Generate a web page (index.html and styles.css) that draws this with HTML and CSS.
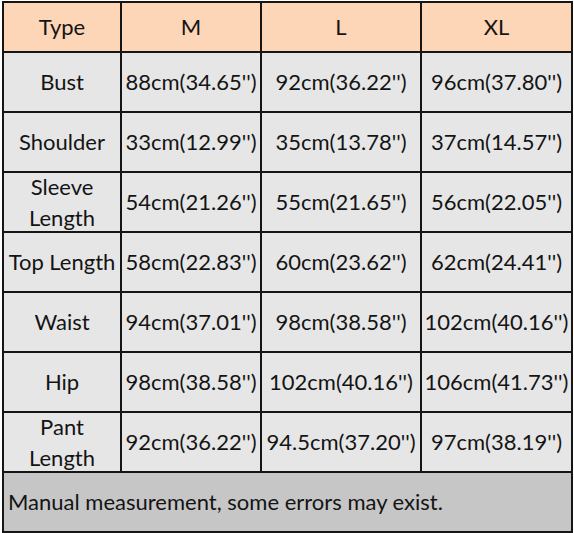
FILE: index.html
```html
<!DOCTYPE html>
<html>
<head>
<meta charset="utf-8">
<link rel="stylesheet" href="styles.css">
</head>
<body>
<table class="size-table">
  <colgroup>
    <col class="c1"><col class="c2"><col class="c3"><col class="c4">
  </colgroup>
  <thead>
    <tr class="head"><th>Type</th><th>M</th><th>L</th><th>XL</th></tr>
  </thead>
  <tbody>
    <tr><td>Bust</td><td>88cm(34.65'')</td><td>92cm(36.22'')</td><td>96cm(37.80'')</td></tr>
    <tr><td>Shoulder</td><td>33cm(12.99'')</td><td>35cm(13.78'')</td><td>37cm(14.57'')</td></tr>
    <tr><td><span class="two">Sleeve<br>Length</span></td><td>54cm(21.26'')</td><td>55cm(21.65'')</td><td>56cm(22.05'')</td></tr>
    <tr><td>Top Length</td><td>58cm(22.83'')</td><td>60cm(23.62'')</td><td>62cm(24.41'')</td></tr>
    <tr><td>Waist</td><td>94cm(37.01'')</td><td>98cm(38.58'')</td><td>102cm(40.16'')</td></tr>
    <tr><td>Hip</td><td>98cm(38.58'')</td><td>102cm(40.16'')</td><td>106cm(41.73'')</td></tr>
    <tr><td><span class="two">Pant<br>Length</span></td><td>92cm(36.22'')</td><td>94.5cm(37.20'')</td><td>97cm(38.19'')</td></tr>
    <tr class="note"><td colspan="4">Manual measurement, some errors may exist.</td></tr>
  </tbody>
</table>
</body>
</html>
```
FILE: styles.css
```css
html, body {
  margin: 0;
  padding: 0;
  background: #ffffff;
}
body {
  padding: 1px 0 0 2px;
  font-family: Lato, "Open Sans", sans-serif;
  color: #141414;
}
.size-table {
  border-collapse: collapse;
  table-layout: fixed;
  width: 569px;
}
.c1 { width: 118px; }
.c2 { width: 140px; }
.c3 { width: 160px; }
.c4 { width: 151px; }
.size-table th,
.size-table td {
  border: 2px solid #151515;
  padding: 0 0 2px 0;
  text-align: center;
  vertical-align: middle;
  font-size: 22px;
  font-weight: normal;
  line-height: 31px;
  white-space: nowrap;
}
.two {
  display: block;
  margin: -3px 0 -4px 0;
}
.size-table tbody tr { height: 60px; background: #e6e6e6; }
.size-table .head { height: 50px; background: #fcd6b6; }
.size-table .note { background: #c6c6c6; }
.size-table .note td {
  text-align: left;
  padding-left: 4px;
}
```
